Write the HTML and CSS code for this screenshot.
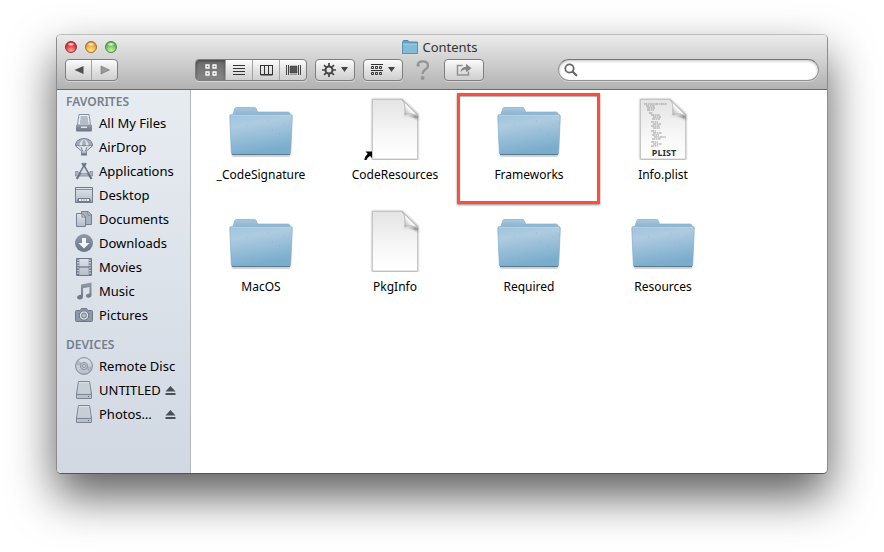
FILE: index.html
```html
<!DOCTYPE html>
<html lang="en">
<head>
<meta charset="utf-8">
<title>Contents</title>
<link rel="stylesheet" href="styles.css">
</head>
<body>
<svg class="defs" aria-hidden="true">
  <defs>
    <linearGradient id="folder-front" x1="0" y1="0" x2="0.25" y2="1">
      <stop offset="0" stop-color="#9fc3dc"/><stop offset="0.3" stop-color="#aecbe0"/><stop offset="1" stop-color="#7aaccd"/>
    </linearGradient>
    <linearGradient id="folder-back" x1="0" y1="0" x2="0" y2="1">
      <stop offset="0" stop-color="#a6c8de"/><stop offset="1" stop-color="#7eabc9"/>
    </linearGradient>
    <linearGradient id="paper" x1="0" y1="0" x2="0" y2="1">
      <stop offset="0" stop-color="#e4e4e4"/><stop offset="0.7" stop-color="#fafafa"/><stop offset="1" stop-color="#ffffff"/>
    </linearGradient>
    <linearGradient id="curl" x1="0.2" y1="0.8" x2="0.75" y2="0.25">
      <stop offset="0" stop-color="#c4c4c4"/><stop offset="0.5" stop-color="#ffffff"/><stop offset="1" stop-color="#e0e0e0"/>
    </linearGradient>
    <linearGradient id="steel" x1="0" y1="0" x2="0" y2="1">
      <stop offset="0" stop-color="#909aa8"/><stop offset="1" stop-color="#6b7686"/>
    </linearGradient>
    <linearGradient id="pale" x1="0" y1="0" x2="0" y2="1">
      <stop offset="0" stop-color="#dfe4ea"/><stop offset="1" stop-color="#b3bcc8"/>
    </linearGradient>
    <filter id="soft" x="-20%" y="-20%" width="140%" height="140%"><feGaussianBlur stdDeviation="0.9"/></filter>
    <symbol id="folder" viewBox="0 0 64 64">
      <path d="M3 58.500h58v2H3z" fill="#555" opacity=".5" filter="url(#soft)"/>
      <path d="M4.500 16.500L6 12.300q.4-.8 1.500-.8h18q1.200 0 1.600.8L28.500 16H59q1.500 0 2 1.500V22H3z" fill="url(#folder-back)" stroke="#82adc8" stroke-width=".7"/>
      <path d="M2.300 18.500h59.400q1.800 0 1.600 2L61.700 57q-.2 1.500-1.500 1.500H3.800Q2.500 58.500 2.300 57L.8 20.500q-.2-2 1.500-2z" fill="url(#folder-front)" stroke="#7faeca" stroke-width=".7"/>
      <path d="M2 19.300h60" stroke="#bdd6e6" stroke-width=".8"/>
      <path d="M3 58.500h58" stroke="#587c91" stroke-width="1"/>
      <path d="M17 29h.7M39 25h.7M50 38h.7M29 45h.7M54 52h.7M43 34h.7M22 51h.7M55 29h.7" stroke="#6d9abb" stroke-width=".7" opacity=".7"/>
    </symbol>
    <symbol id="document" viewBox="0 0 64 64">
      <path d="M9 3h30l16 15v46H9z" fill="#555" opacity=".55" filter="url(#soft)"/>
      <path d="M9.500 3.500h29.500L54.500 18.500V63h-45z" fill="url(#paper)" stroke="#c0c0c0" stroke-width=".8"/>
      <path d="M41 7v11.500q0 1 1.500 1h12v4.500q-1-4-13.500-4.500z" fill="#333" opacity=".75" filter="url(#soft)"/>
      <path d="M39 3.500q3 3 2.800 7v8.500q5-2.500 12.700.5z" fill="url(#curl)" stroke="#aaa" stroke-width=".7"/>
    </symbol>
    <symbol id="eject" viewBox="0 0 11 9"><path d="M5.500 0L10.500 5.500H.5zM.5 7h10v2H.5z" fill="#4b4e52"/></symbol>
    <symbol id="drive" viewBox="0 0 18 18">
      <path d="M3.500.5h11L16.500 13v4q0 .5-.5.500H2q-.5 0-.5-.5V13z" fill="url(#pale)" stroke="#7b8594"/>
      <path d="M2 13.500h14" stroke="#7b8594"/><path d="M4.500 2h9l1.200 10H3.300z" fill="#c8ced6"/><path d="M13 15.500h1" stroke="#596575"/>
    </symbol>
  </defs>
</svg>

<main class="window">
  <header class="chrome">
    <div class="titlebar">
      <div class="lights">
        <button class="light red" aria-label="Close"></button>
        <button class="light amber" aria-label="Minimize"></button>
        <button class="light green" aria-label="Zoom"></button>
      </div>
      <h1 class="title">
        <svg width="16" height="14" viewBox="0 0 16 14" aria-hidden="true"><path d="M.5 2.500L1.500.5H6l1 1.500h8.500V13.500H.5z" fill="#61a3c7" stroke="#4b89ad"/><path d="M.5 3.500h15v10H.5z" fill="#83bbd7" stroke="#5795b8"/><path d="M1 4h14" stroke="#b1d6e8"/></svg>
        Contents
      </h1>
    </div>
    <div class="toolbar">
      <div class="group history">
        <button aria-label="Back"><svg width="10" height="10" viewBox="0 0 10 10"><path d="M9.500 1v8L.5 5z" fill="#505050"/></svg></button>
        <button aria-label="Forward"><svg width="10" height="10" viewBox="0 0 10 10"><path d="M1 1v8l8.500-4z" fill="#999" stroke="#777" stroke-width=".6"/></svg></button>
      </div>
      <div class="group views">
        <button class="on" aria-label="Icon view"><svg width="12" height="12" viewBox="0 0 12 12"><path d="M1 1h3v3H1zM8 1h3v3H8zM1 8h3v3H1zM8 8h3v3H8z" fill="none" stroke="#fff" stroke-width="1.300"/></svg></button>
        <button aria-label="List view"><svg width="12" height="12" viewBox="0 0 12 12"><path d="M0 1.500h12M0 4.500h12M0 7.500h12M0 10.500h12" stroke="#333"/></svg></button>
        <button aria-label="Column view"><svg width="13" height="12" viewBox="0 0 13 12"><path d="M.5 1v10h12V1M4.500 1v10M8.500 1v10" fill="none" stroke="#333"/><path d="M0 1.500h13M0 10.500h13" stroke="#333"/></svg></button>
        <button aria-label="Cover flow"><svg width="15" height="12" viewBox="0 0 15 12"><path d="M.5 1v10M2.500 1v10M12.500 1v10M14.500 1v10" stroke="#444"/><path d="M4 2h7v7H4z" fill="#555" stroke="#333" stroke-width=".5"/><path d="M4 10.500h7" stroke="#999"/></svg></button>
      </div>
      <button class="tool" aria-label="Action">
        <svg width="14" height="14" viewBox="0 0 14 14"><circle cx="7" cy="7" r="3.500" fill="none" stroke="#444" stroke-width="2"/><path d="M7 0v3M7 11v3M0 7h3M11 7h3M2.050 2.050l2.100 2.100M9.850 9.850l2.100 2.100M11.950 2.050l-2.100 2.100M4.150 9.850l-2.100 2.100" stroke="#444" stroke-width="1.700"/></svg>
        <svg width="7" height="5" viewBox="0 0 7 5"><path d="M0 0h7L3.500 5z" fill="#444"/></svg>
      </button>
      <button class="tool" aria-label="Arrange">
        <svg width="12" height="12" viewBox="0 0 12 12"><path d="M0 .5h12M0 6.500h12" stroke="#333"/><path d="M.5 2.500h2v2h-2zM4.500 2.500h2v2h-2zM8.500 2.500h2v2h-2zM.5 8.500h2v2h-2zM4.500 8.500h2v2h-2zM8.500 8.500h2v2h-2z" fill="none" stroke="#333"/></svg>
        <svg width="7" height="5" viewBox="0 0 7 5"><path d="M0 0h7L3.500 5z" fill="#444"/></svg>
      </button>
      <button class="help" aria-label="Help"><svg width="14" height="20" viewBox="0 0 14 20"><path d="M1.500 5.500Q2 1.300 6.500 1.300q5.500 0 5.500 4.200 0 2.500-3 4.200Q6.600 11.200 6.600 14" fill="none" stroke="#949494" stroke-width="2.300"/><circle cx="2.300" cy="5.200" r="1.500" fill="#949494"/><circle cx="6.600" cy="18" r="1.900" fill="#949494"/></svg></button>
      <button class="tool share" aria-label="Share"><svg width="16" height="13" viewBox="0 0 16 13"><path d="M6.500 2.500h-5v9.500h11V8.500" fill="none" stroke="#929292" stroke-width="1.500"/><path d="M4.500 9Q5 4.200 10 3.800V.8l5.500 4.400L10 9.200V6.500Q6.500 6.300 4.500 9z" fill="#858585"/></svg></button>
      <label class="search">
        <svg width="14" height="14" viewBox="0 0 14 14" aria-hidden="true"><circle cx="5.500" cy="5.500" r="4.200" fill="none" stroke="#666" stroke-width="1.800"/><path d="M8.700 8.700l3.600 3.600" stroke="#666" stroke-width="2.200" stroke-linecap="round"/></svg>
        <input type="text" aria-label="Search">
      </label>
    </div>
  </header>

  <div class="body">
    <nav class="sidebar">
      <h2>FAVORITES</h2>
      <ul>
        <li><a href="#"><svg viewBox="0 0 18 18"><path d="M4 .5h10l1.500 10.500H2.500z" fill="#eceff3" stroke="#8590a0"/><path d="M5.500 3h7M5.500 5h7.500M5 7h8M5 9h8.500" stroke="#7f8a9a"/><path d="M1 11h16v5.500q0 1-1 1H2q-1 0-1-1z" fill="url(#steel)"/><path d="M6 12.500h6v1.500H6z" fill="#e0e5eb"/></svg><span>All My Files</span></a></li>
        <li><a href="#"><svg viewBox="0 0 18 18"><path d="M1 8.200L7 13.500M17 8.200L11 13.500M6 9l2 5M12 9L10 14" stroke="#707b8b"/><path d="M.5 8Q.5 1 9 .5q8.500.5 8.500 7.500-2-1.500-4 0-2-1.500-4.500 0-2.500-1.500-4.500 0-2-1.500-4 0z" fill="#a3adba" stroke="#727d8d"/><path d="M4.500 7.500Q5 3 9 .8 7 4 7 7zM13.500 7.500Q13 3 9 .8 11 4 11 7z" fill="#dfe4ea"/><path d="M6 13h6v4.500H6z" fill="url(#steel)"/><path d="M7 14h4" stroke="#dfe4ea"/></svg><span>AirDrop</span></a></li>
        <li><a href="#"><svg viewBox="0 0 18 18"><path d="M.5 9.500H3v1.500h12V9.500h2.500v4.500H.5z" fill="#aeb8c5" stroke="#7f8a99" stroke-width=".8"/><path d="M7.200 1L16.500 17" stroke="#6a7585" stroke-width="2.200"/><path d="M10.800 1L1.800 17" stroke="#6a7585" stroke-width="2.200"/><path d="M9 5L5.500 11h7z" fill="#d8dee6"/></svg><span>Applications</span></a></li>
        <li><a href="#"><svg viewBox="0 0 18 18"><path d="M.5 1.500h17v15H.5z" fill="url(#pale)" stroke="#707b8b"/><path d="M1 3.500h16" stroke="#8792a1"/><path d="M3 12h12l1.500 4h-15z" fill="#707b8b"/><path d="M4 13h2v2H4zM6.700 13h2v2h-2zM9.400 13h2v2h-2zM12 13h2v2h-2z" fill="#edf0f4"/></svg><span>Desktop</span></a></li>
        <li><a href="#"><svg viewBox="0 0 18 18"><path d="M6.500 1.500H13l3.500 3.500v9.500h-10z" fill="#a9b3c0" stroke="#748091"/><path d="M13 1.500V5h3.500z" fill="#e2e7ed" stroke="#748091"/><path d="M1.500 3.500H7L10.500 7v9.500h-9z" fill="url(#pale)" stroke="#748091"/><path d="M7 3.500V7h3.500z" fill="#edf0f4" stroke="#748091"/></svg><span>Documents</span></a></li>
        <li><a href="#"><svg viewBox="0 0 18 18"><circle cx="9" cy="9" r="9" fill="url(#steel)"/><path d="M7 4h4v5h3.500L9 14.500 3.500 9H7z" fill="#f1f4f8"/></svg><span>Downloads</span></a></li>
        <li><a href="#"><svg viewBox="0 0 18 18"><path d="M1.500.5h15v17h-15z" fill="url(#pale)" stroke="#6d7888"/><path d="M3 1v16M15 1v16" stroke="#6d7888" stroke-width="2.500"/><path d="M3 1.500v15M15 1.500v15" stroke="#e4e9ef" stroke-width="1.400" stroke-dasharray="1.300 1.300"/><path d="M4 9h10" stroke="#6d7888" stroke-width="1.300"/></svg><span>Movies</span></a></li>
        <li><a href="#"><svg viewBox="0 0 18 18"><path d="M6 2.500L16.500.5v12.500q0 2.500-3 2.800-2.500.2-2.500-1.800 0-2.200 3.500-2.600V5L8 6.300v8.200q0 2.800-3 3-3 .1-3-2 0-2.300 4-2.700z" fill="url(#steel)"/></svg><span>Music</span></a></li>
        <li><a href="#"><svg viewBox="0 0 18 18"><path d="M1.500 4.500H5L6.500 2.500h5L13 4.500h3.500q1 0 1 1v9q0 1-1 1h-15q-1 0-1-1v-9q0-1 1-1z" fill="#8e99a8" stroke="#6c7787"/><circle cx="9" cy="9.500" r="4.700" fill="#dfe4ea" stroke="#657080"/><circle cx="9" cy="9.500" r="2.500" fill="#b4bdc9" stroke="#707b8b"/></svg><span>Pictures</span></a></li>
      </ul>
      <h2>DEVICES</h2>
      <ul>
        <li><a href="#"><svg viewBox="0 0 18 18"><circle cx="9" cy="9" r="8.400" fill="url(#pale)" stroke="#7e8998"/><path d="M9 9L3 2.500Q.5 5 1 8zM9 9l6 6.500q2.500-2.500 2-5.500z" fill="#9aa4b1" opacity=".6"/><circle cx="9" cy="9" r="3.600" fill="#c4cbd4" stroke="#8792a1"/><circle cx="9" cy="9" r="1.500" fill="#eceff3" stroke="#7d8897"/></svg><span>Remote Disc</span></a></li>
        <li><a href="#"><svg viewBox="0 0 18 18"><use href="#drive"/></svg><span>UNTITLED</span></a><button class="eject" aria-label="Eject UNTITLED"><svg viewBox="0 0 11 9"><use href="#eject"/></svg></button></li>
        <li><a href="#"><svg viewBox="0 0 18 18"><use href="#drive"/></svg><span>Photos…</span></a><button class="eject" aria-label="Eject Photos"><svg viewBox="0 0 11 9"><use href="#eject"/></svg></button></li>
      </ul>
    </nav>

    <section class="files" aria-label="Contents">
      <a class="file" href="#"><svg viewBox="0 0 64 64"><use href="#folder"/></svg><span>_CodeSignature</span></a>
      <a class="file" href="#"><svg viewBox="0 0 64 64"><use href="#document"/><path d="M2.500 55.500H9V62L7 60Q4 61.500 3.500 64.300H1.300Q1.500 60.500 4.700 57.700z" fill="#000"/></svg><span>CodeResources</span></a>
      <a class="file marked" href="#"><svg viewBox="0 0 64 64"><use href="#folder"/></svg><span>Frameworks</span></a>
      <a class="file" href="#"><svg viewBox="0 0 64 64"><use href="#document"/><path d="M13 8h23M15 10h9M16 12h8M16 14h7M18 17h4M20 19h9M22 21h8M21 23h8M20 26h7M22 28h8M20 30h9M22 32h7M20 35h5M22 37h9M21 39h7M23 41h12M21 43h9M20 46h7M22 48h9M20 50h7" stroke="#999" stroke-width="1" stroke-dasharray="3 .6 1.500 .5"/><text x="33" y="60" text-anchor="middle" class="badge">PLIST</text></svg><span>Info.plist</span></a>
      <a class="file" href="#"><svg viewBox="0 0 64 64"><use href="#folder"/></svg><span>MacOS</span></a>
      <a class="file" href="#"><svg viewBox="0 0 64 64"><use href="#document"/></svg><span>PkgInfo</span></a>
      <a class="file" href="#"><svg viewBox="0 0 64 64"><use href="#folder"/></svg><span>Required</span></a>
      <a class="file" href="#"><svg viewBox="0 0 64 64"><use href="#folder"/></svg><span>Resources</span></a>
    </section>
  </div>
</main>
</body>
</html>
```
FILE: styles.css
```css
* { box-sizing: border-box; }

body {
  margin: 0;
  min-height: 100vh;
  padding: 34px 56px 78px;
  display: flex;
  background: #fff;
  color: #000;
  font-family: "Lucida Grande", "Noto Sans", "Open Sans", sans-serif;
  font-size: 13px;
  overflow: hidden;
}

.defs { position: absolute; width: 0; height: 0; }

button {
  margin: 0;
  padding: 0;
  border: 0;
  background: none;
  font: inherit;
}

svg { display: block; flex: none; }

.window {
  flex: 1;
  display: flex;
  flex-direction: column;
  border: 1px solid;
  border-color: #bdbdbd #8c8c8c #555;
  border-radius: 5px;
  background: #fff;
  box-shadow: 0 22px 46px rgba(0, 0, 0, .64);
}

.chrome {
  border-bottom: 1px solid #6a6a6a;
  border-radius: 4px 4px 0 0;
  background: linear-gradient(#ebebeb, #d2d2d2 45%, #b2b2b2);
}

.titlebar {
  height: 23px;
  padding: 0 8px;
  display: grid;
  grid-template-columns: 1fr auto 1fr;
  align-items: center;
}

.lights { display: flex; gap: 8px; }

.light {
  width: 12px;
  height: 12px;
  border: 1px solid;
  border-radius: 50%;
}

.red { background: radial-gradient(ellipse 4px 2px at 50% 22%, #fff, transparent), radial-gradient(circle at 50% 90%, #ffaea6, #e0313a 60%, #b8202b); border-color: #982b31; }
.amber { background: radial-gradient(ellipse 4px 2px at 50% 22%, #fff, transparent), radial-gradient(circle at 50% 90%, #fff08c, #f0a433 60%, #c3771f); border-color: #a06b2c; }
.green { background: radial-gradient(ellipse 4px 2px at 50% 22%, #fff, transparent), radial-gradient(circle at 50% 90%, #cdf8a8, #6bbf58 60%, #468f3e); border-color: #4b8746; }

.title {
  margin: 0;
  padding-right: 4px;
  display: flex;
  align-items: center;
  gap: 4px;
  color: #333;
  font-size: 13px;
  font-weight: 400;
  line-height: 20px;
}

.toolbar {
  height: 31px;
  padding: 0 8px 8px;
  display: flex;
  align-items: center;
}

.group, .tool {
  height: 22px;
  display: flex;
  border: 1px solid #7e7e7e;
  border-radius: 4px;
  background: linear-gradient(#fcfcfc, #e3e3e3 50%, #cfcfcf);
  box-shadow: 0 1px 0 rgba(255, 255, 255, .4);
}

.group button {
  flex: 1;
  display: flex;
  align-items: center;
  justify-content: center;
}

.group button + button { border-left: 1px solid #a2a2a2; }

.history { width: 53px; margin-right: 77px; }
.views { width: 112px; }

.group .on {
  flex: 0 0 29px;
  border-radius: 3px 0 0 3px;
  background: linear-gradient(#696969, #888);
  box-shadow: inset 0 1px 3px rgba(0, 0, 0, .4);
}

.tool {
  width: 40px;
  margin-left: 8px;
  align-items: center;
  justify-content: center;
  gap: 5px;
}

.help { margin-left: 13px; }
.share { margin-left: 14px; }

.search {
  width: 261px;
  height: 22px;
  margin-left: auto;
  padding: 0 6px 0 5px;
  display: flex;
  align-items: center;
  border: 1px solid #929292;
  border-top-color: #777;
  border-radius: 11px;
  background: #fff;
  box-shadow: inset 0 1px 3px rgba(0, 0, 0, .25), 0 1px 0 rgba(255, 255, 255, .4);
}

.search input {
  flex: 1;
  min-width: 0;
  margin-left: 4px;
  border: 0;
  outline: 0;
  background: none;
  font: inherit;
}

.body { flex: 1; display: flex; }

.sidebar {
  flex: none;
  width: 134px;
  padding-top: 3px;
  border-right: 1px solid #b5b9be;
  border-radius: 0 0 0 4px;
  background: linear-gradient(#e7ecf1, #d1d8e2);
}

.sidebar h2 {
  margin: 0;
  padding-left: 9px;
  color: #74808e;
  font-size: 12px;
  font-weight: 600;
  line-height: 18px;
}

.sidebar ul {
  margin: 0 0 9px;
  padding: 0;
  list-style: none;
}

.sidebar li {
  height: 24px;
  padding: 0 14px 0 18px;
  display: flex;
  align-items: center;
  justify-content: space-between;
}

.sidebar a {
  display: flex;
  align-items: center;
  gap: 6px;
  color: inherit;
  line-height: 20px;
  text-decoration: none;
  white-space: nowrap;
}

.sidebar a svg { width: 18px; height: 18px; }
.eject svg { width: 11px; height: 9px; }

.files {
  flex: 1;
  padding: 6px 3px;
  display: grid;
  grid-template-columns: repeat(auto-fill, 134px);
  grid-auto-rows: 112px;
}

.file {
  position: relative;
  display: flex;
  flex-direction: column;
  align-items: center;
  gap: 5px;
  color: inherit;
  font-size: 12px;
  line-height: 20px;
  text-decoration: none;
}

.file svg { width: 64px; height: 64px; }

.badge {
  fill: #333;
  font-size: 9px;
  font-weight: 700;
}

.marked::after {
  content: "";
  position: absolute;
  inset: -3px -4px 4px -5px;
  border: 3px solid #fd4d3b;
  box-shadow: 0 1px 2px rgba(0, 0, 0, .45), inset 0 1px 1px rgba(0, 0, 0, .3);
}
```
